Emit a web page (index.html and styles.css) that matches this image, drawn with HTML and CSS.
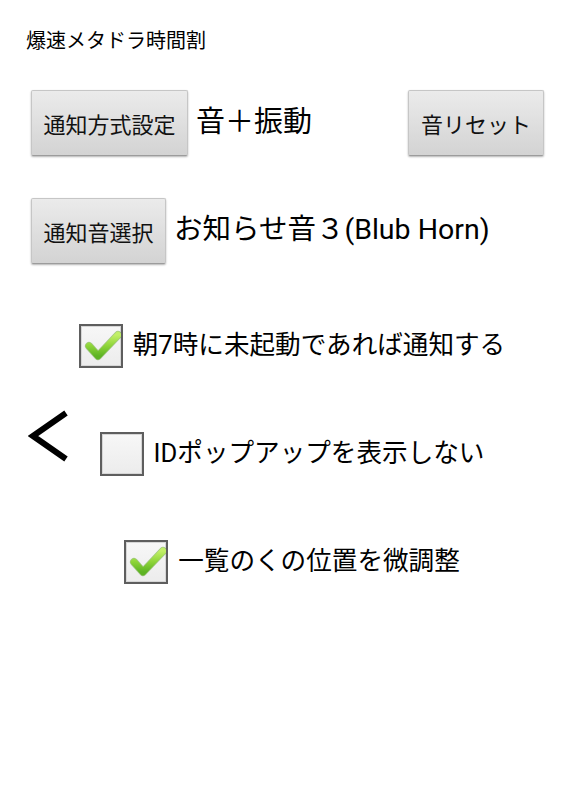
FILE: index.html
```html
<!DOCTYPE html>
<html lang="ja">

<head>
    <meta charset="UTF-8">
    <meta name="viewport" content="width=device-width, initial-scale=1.0">
    <title>爆速メタドラ時間割</title>
    <link rel="stylesheet" href="styles.css">
</head>

<body>

    <svg class="defs" width="0" height="0">
        <defs>
            <linearGradient id="tick-fill" x1="0" y1="0" x2="0" y2="1">
                <stop offset="0" stop-color="#c2ef68" />
                <stop offset="0.5" stop-color="#8fd53a" />
                <stop offset="1" stop-color="#5db323" />
            </linearGradient>
        </defs>
    </svg>

    <h1 class="app-title">爆速メタドラ時間割</h1>

    <div class="setting-row">
        <button class="btn btn-mode">通知方式設定</button>
        <span class="setting-value">音＋振動</span>
        <button class="btn btn-reset">音リセット</button>
    </div>

    <div class="setting-row sound-row">
        <button class="btn btn-sound">通知音選択</button>
        <span class="setting-value value-sound">お知らせ音３(Blub Horn)</span>
    </div>

    <div class="check-row row-morning">
        <label class="check">
            <span class="box">
                <svg viewBox="0 0 40 40" width="40" height="40">
                    <polyline points="8,20 17,30 37,9" class="tick-edge" />
                    <polyline points="8,20 17,30 37,9" class="tick" />
                </svg>
            </span>
            <span class="check-text">朝7時に未起動であれば通知する</span>
        </label>
    </div>

    <div class="check-row row-popup">
        <svg class="back-mark" viewBox="0 0 40 52" width="40" height="52">
            <polyline points="38,3 5,26 38,49" />
        </svg>
        <label class="check">
            <span class="box"></span>
            <span class="check-text">IDポップアップを表示しない</span>
        </label>
    </div>

    <div class="check-row row-adjust">
        <label class="check">
            <span class="box">
                <svg viewBox="0 0 40 40" width="40" height="40">
                    <polyline points="8,20 17,30 37,9" class="tick-edge" />
                    <polyline points="8,20 17,30 37,9" class="tick" />
                </svg>
            </span>
            <span class="check-text">一覧のくの位置を微調整</span>
        </label>
    </div>

</body>

</html>
```

FILE: styles.css
```css
*,
*::before,
*::after {
    box-sizing: border-box;
}

body {
    margin: 0;
    width: 576px;
    height: 800px;
    background-color: white;
    color: black;
    font-family: Roboto, "Noto Sans CJK JP", sans-serif;
}

.defs {
    position: absolute;
}

.app-title {
    margin: 0;
    padding: 29px 0 0 26px;
    font-size: 20px;
    line-height: 24px;
    font-weight: normal;
}

.setting-row {
    display: flex;
    align-items: center;
    height: 66px;
    margin-top: 37px;
    padding: 0 32px 0 31px;
}

.sound-row {
    margin-top: 42px;
}

.btn {
    height: 66px;
    padding: 0;
    border: 1px solid #c6c6c6;
    border-bottom-color: #9c9c9c;
    border-radius: 2px;
    background: linear-gradient(#ebebeb, #d3d3d3);
    box-shadow: 0 1px 2px rgba(0, 0, 0, 0.3);
    color: #111;
    font-family: Roboto, "Noto Sans CJK JP", sans-serif;
    font-size: 22px;
    outline: none;
}

.btn-mode {
    width: 157px;
}

.btn-sound {
    width: 135px;
}

.btn-reset {
    width: 136px;
    margin-left: auto;
}

.setting-value {
    margin-left: 8px;
    font-size: 29px;
    line-height: 34px;
    margin-top: -3px;
}

.value-sound {
    margin-top: -2px;
    font-size: 28.5px;
}

.check-row {
    display: grid;
    grid-template-columns: 1fr auto 1fr;
    height: 44px;
    margin-top: 64px;
    padding-left: 8px;
}

.row-morning {
    margin-top: 60px;
}

.check {
    grid-column: 2;
    display: flex;
    align-items: center;
}

.back-mark {
    grid-column: 1;
    grid-row: 1;
    justify-self: start;
    align-self: start;
    margin: -22px 0 0 20px;
}

.back-mark polyline {
    fill: none;
    stroke: black;
    stroke-width: 6;
    stroke-linejoin: miter;
}

.box {
    display: flex;
    align-items: center;
    justify-content: center;
    width: 44px;
    height: 44px;
    border: 2px solid #5e5e5e;
    background: linear-gradient(#f7f7f7, #ececec);
    box-shadow: inset 0 0 0 1px #d6d6d6;
}

.tick {
    fill: none;
    stroke: url(#tick-fill);
    stroke-width: 6.5;
    stroke-linecap: round;
    stroke-linejoin: round;
}

.tick-edge {
    fill: none;
    stroke: #6aa63a;
    stroke-width: 8;
    stroke-linecap: round;
    stroke-linejoin: round;
    opacity: 0.6;
}

.check-text {
    margin-left: 10px;
    font-size: 25.6px;
    line-height: 30px;
    margin-top: -2px;
}
```
